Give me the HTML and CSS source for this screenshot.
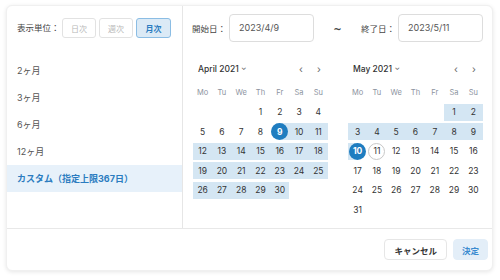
FILE: index.html
```html
<!DOCTYPE html>
<html lang="ja">
<head>
    <meta charset="UTF-8">
    <title>期間選択</title>
    <link rel="stylesheet" href="styles.css">
</head>
<body>
    <div class="panel">
        <div class="main">
            <div class="side">
                <div class="unit-row">
                    <span class="unit-label">表示単位：</span>
                    <button class="unit-btn">日次</button>
                    <button class="unit-btn">週次</button>
                    <button class="unit-btn active">月次</button>
                </div>
                <ul class="range-list">
                    <li>2ヶ月</li>
                    <li>3ヶ月</li>
                    <li>6ヶ月</li>
                    <li>12ヶ月</li>
                    <li class="selected">カスタム（指定上限367日）</li>
                </ul>
            </div>

            <div class="content">
                <div class="date-row">
                    <span class="date-label">開始日：</span>
                    <div class="date-input">2023/4/9</div>
                    <span class="tilde">~</span>
                    <span class="date-label">終了日：</span>
                    <div class="date-input">2023/5/11</div>
                </div>

                <div class="calendars">
                    <div class="cal">
                        <div class="cal-head">
                            <span class="cal-title">April 2021 <span class="caret">&#8964;</span></span>
                            <span class="nav">&#8249;</span>
                            <span class="nav">&#8250;</span>
                        </div>
                        <div class="grid">
                            <span class="dow">Mo</span><span class="dow">Tu</span><span class="dow">We</span><span class="dow">Th</span><span class="dow">Fr</span><span class="dow">Sa</span><span class="dow">Su</span>
                            <span></span><span></span><span></span><span class="d">1</span><span class="d">2</span><span class="d">3</span><span class="d">4</span>
                            <span class="d">5</span><span class="d">6</span><span class="d">7</span><span class="d">8</span><span class="d start"><b>9</b></span><span class="d in">10</span><span class="d in">11</span>
                            <span class="d in">12</span><span class="d in">13</span><span class="d in">14</span><span class="d in">15</span><span class="d in">16</span><span class="d in">17</span><span class="d in">18</span>
                            <span class="d in">19</span><span class="d in">20</span><span class="d in">21</span><span class="d in">22</span><span class="d in">23</span><span class="d in">24</span><span class="d in">25</span>
                            <span class="d in">26</span><span class="d in">27</span><span class="d in">28</span><span class="d in">29</span><span class="d in">30</span><span></span><span></span>
                        </div>
                    </div>

                    <div class="cal">
                        <div class="cal-head">
                            <span class="cal-title">May 2021 <span class="caret">&#8964;</span></span>
                            <span class="nav">&#8249;</span>
                            <span class="nav">&#8250;</span>
                        </div>
                        <div class="grid">
                            <span class="dow">Mo</span><span class="dow">Tu</span><span class="dow">We</span><span class="dow">Th</span><span class="dow">Fr</span><span class="dow">Sa</span><span class="dow">Su</span>
                            <span></span><span></span><span></span><span></span><span></span><span class="d in">1</span><span class="d in">2</span>
                            <span class="d in">3</span><span class="d in">4</span><span class="d in">5</span><span class="d in">6</span><span class="d in">7</span><span class="d in">8</span><span class="d in">9</span>
                            <span class="d end"><b>10</b></span><span class="d today"><b>11</b></span><span class="d">12</span><span class="d">13</span><span class="d">14</span><span class="d">15</span><span class="d">16</span>
                            <span class="d">17</span><span class="d">18</span><span class="d">19</span><span class="d">20</span><span class="d">21</span><span class="d">22</span><span class="d">23</span>
                            <span class="d">24</span><span class="d">25</span><span class="d">26</span><span class="d">27</span><span class="d">28</span><span class="d">29</span><span class="d">30</span>
                            <span class="d">31</span>
                        </div>
                    </div>
                </div>
            </div>
        </div>

        <div class="footer">
            <button class="btn">キャンセル</button>
            <button class="btn primary">決定</button>
        </div>
    </div>
</body>
</html>
```
FILE: styles.css
```css
body {
    margin: 0;
    padding: 5px 7px 9px 6px;
    background: #fff;
    font-family: Inter, "Noto Sans CJK JP", sans-serif;
    font-size: 8.5px;
    color: #333;
}
.panel {
    height: 266px;
    box-sizing: border-box;
    border: 1px solid #f0f0f0;
    border-radius: 6px;
    box-shadow: 0 1px 4px rgba(0,0,0,0.1);
    display: flex;
    flex-direction: column;
    background: #fff;
}
.main {
    display: flex;
    height: 222px;
}
.side {
    width: 175px;
    border-right: 1px solid #e6e6e6;
}
.unit-row {
    display: flex;
    align-items: flex-start;
    padding: 12px 0 0 10px;
    height: 39px;
}
.unit-label {
    width: 45px;
    line-height: 20px;
    color: #444;
}
.unit-btn {
    width: 34px;
    height: 20px;
    margin-right: 3px;
    padding: 0;
    border: 1px solid #e2e2e2;
    border-radius: 3px;
    background: #fff;
    color: #b8b8b8;
    font-family: inherit;
    font-size: 8px;
}
.unit-btn.active {
    width: 35px;
    border-color: #8bbde4;
    background: #dbeaf6;
    color: #2b7cc0;
    font-weight: bold;
}
.range-list {
    list-style: none;
    margin: 0;
    padding: 0;
}
.range-list li {
    height: 27px;
    line-height: 27px;
    padding-left: 10px;
    color: #555;
    font-size: 9px;
}
.range-list li.selected {
    background: #e7f1fa;
    color: #2b7cc0;
    font-weight: bold;
}
.content {
    flex: 1;
    padding: 8px 9px 0 9px;
}
.date-row {
    display: flex;
    align-items: center;
    height: 28px;
}
.date-label {
    width: 37px;
    color: #444;
}
.date-input {
    width: 85px;
    height: 28px;
    line-height: 26px;
    border: 1px solid #ddd;
    border-radius: 4px;
    padding-left: 9px;
    box-sizing: border-box;
    color: #555;
    font-size: 9px;
}
.tilde {
    width: 47px;
    text-align: center;
    font-family: "DejaVu Sans", sans-serif;
    font-size: 10px;
    font-weight: bold;
    color: #444;
    padding-top: 3px;
}
.calendars {
    display: flex;
    gap: 20px;
    margin-top: 19px;
    padding-left: 1px;
}
.cal {
    width: 135px;
}
.cal-head {
    display: flex;
    align-items: center;
    height: 16px;
    padding-left: 5px;
    margin-bottom: 7px;
}
.cal-title {
    flex: 1;
    font-weight: 500;
    color: #333;
}
.caret {
    font-size: 7px;
    color: #666;
    position: relative;
    top: -2px;
}
.nav {
    width: 18px;
    text-align: center;
    color: #666;
    font-size: 10px;
}
.grid {
    display: grid;
    grid-template-columns: repeat(7, 1fr);
    grid-auto-rows: 17px;
    row-gap: 2.5px;
}
.grid span {
    display: flex;
    align-items: center;
    justify-content: center;
}
.dow {
    color: #8c93a0;
    font-size: 7.5px;
}
.d {
    color: #333;
}
.d.in {
    background: #d4e6f3;
}
.d.start {
    background: linear-gradient(to right, transparent 50%, #d4e6f3 50%);
}
.d.end {
    background: linear-gradient(to right, #d4e6f3 50%, transparent 50%);
}
.d b {
    width: 17px;
    height: 17px;
    border-radius: 50%;
    display: flex;
    align-items: center;
    justify-content: center;
    box-sizing: border-box;
    font-weight: normal;
}
.d.start b, .d.end b {
    background: #1f7dc0;
    color: #fff;
    font-weight: bold;
}
.d.today b {
    border: 1px solid #c8c8c8;
}
.footer {
    border-top: 1px solid #e8e8e8;
    flex: 1;
    display: flex;
    justify-content: flex-end;
    align-items: flex-start;
    gap: 6px;
    padding: 10px 4px 0 0;
}
.btn {
    height: 21px;
    padding: 0 9px;
    border: 1px solid #e6e6e6;
    border-radius: 4px;
    background: #fff;
    color: #333;
    font-family: inherit;
    font-size: 8.5px;
    font-weight: bold;
}
.btn.primary {
    width: 35px;
    padding: 0;
    border-color: #e3eef8;
    background: #e3eef8;
    color: #3a8bd0;
}
```
